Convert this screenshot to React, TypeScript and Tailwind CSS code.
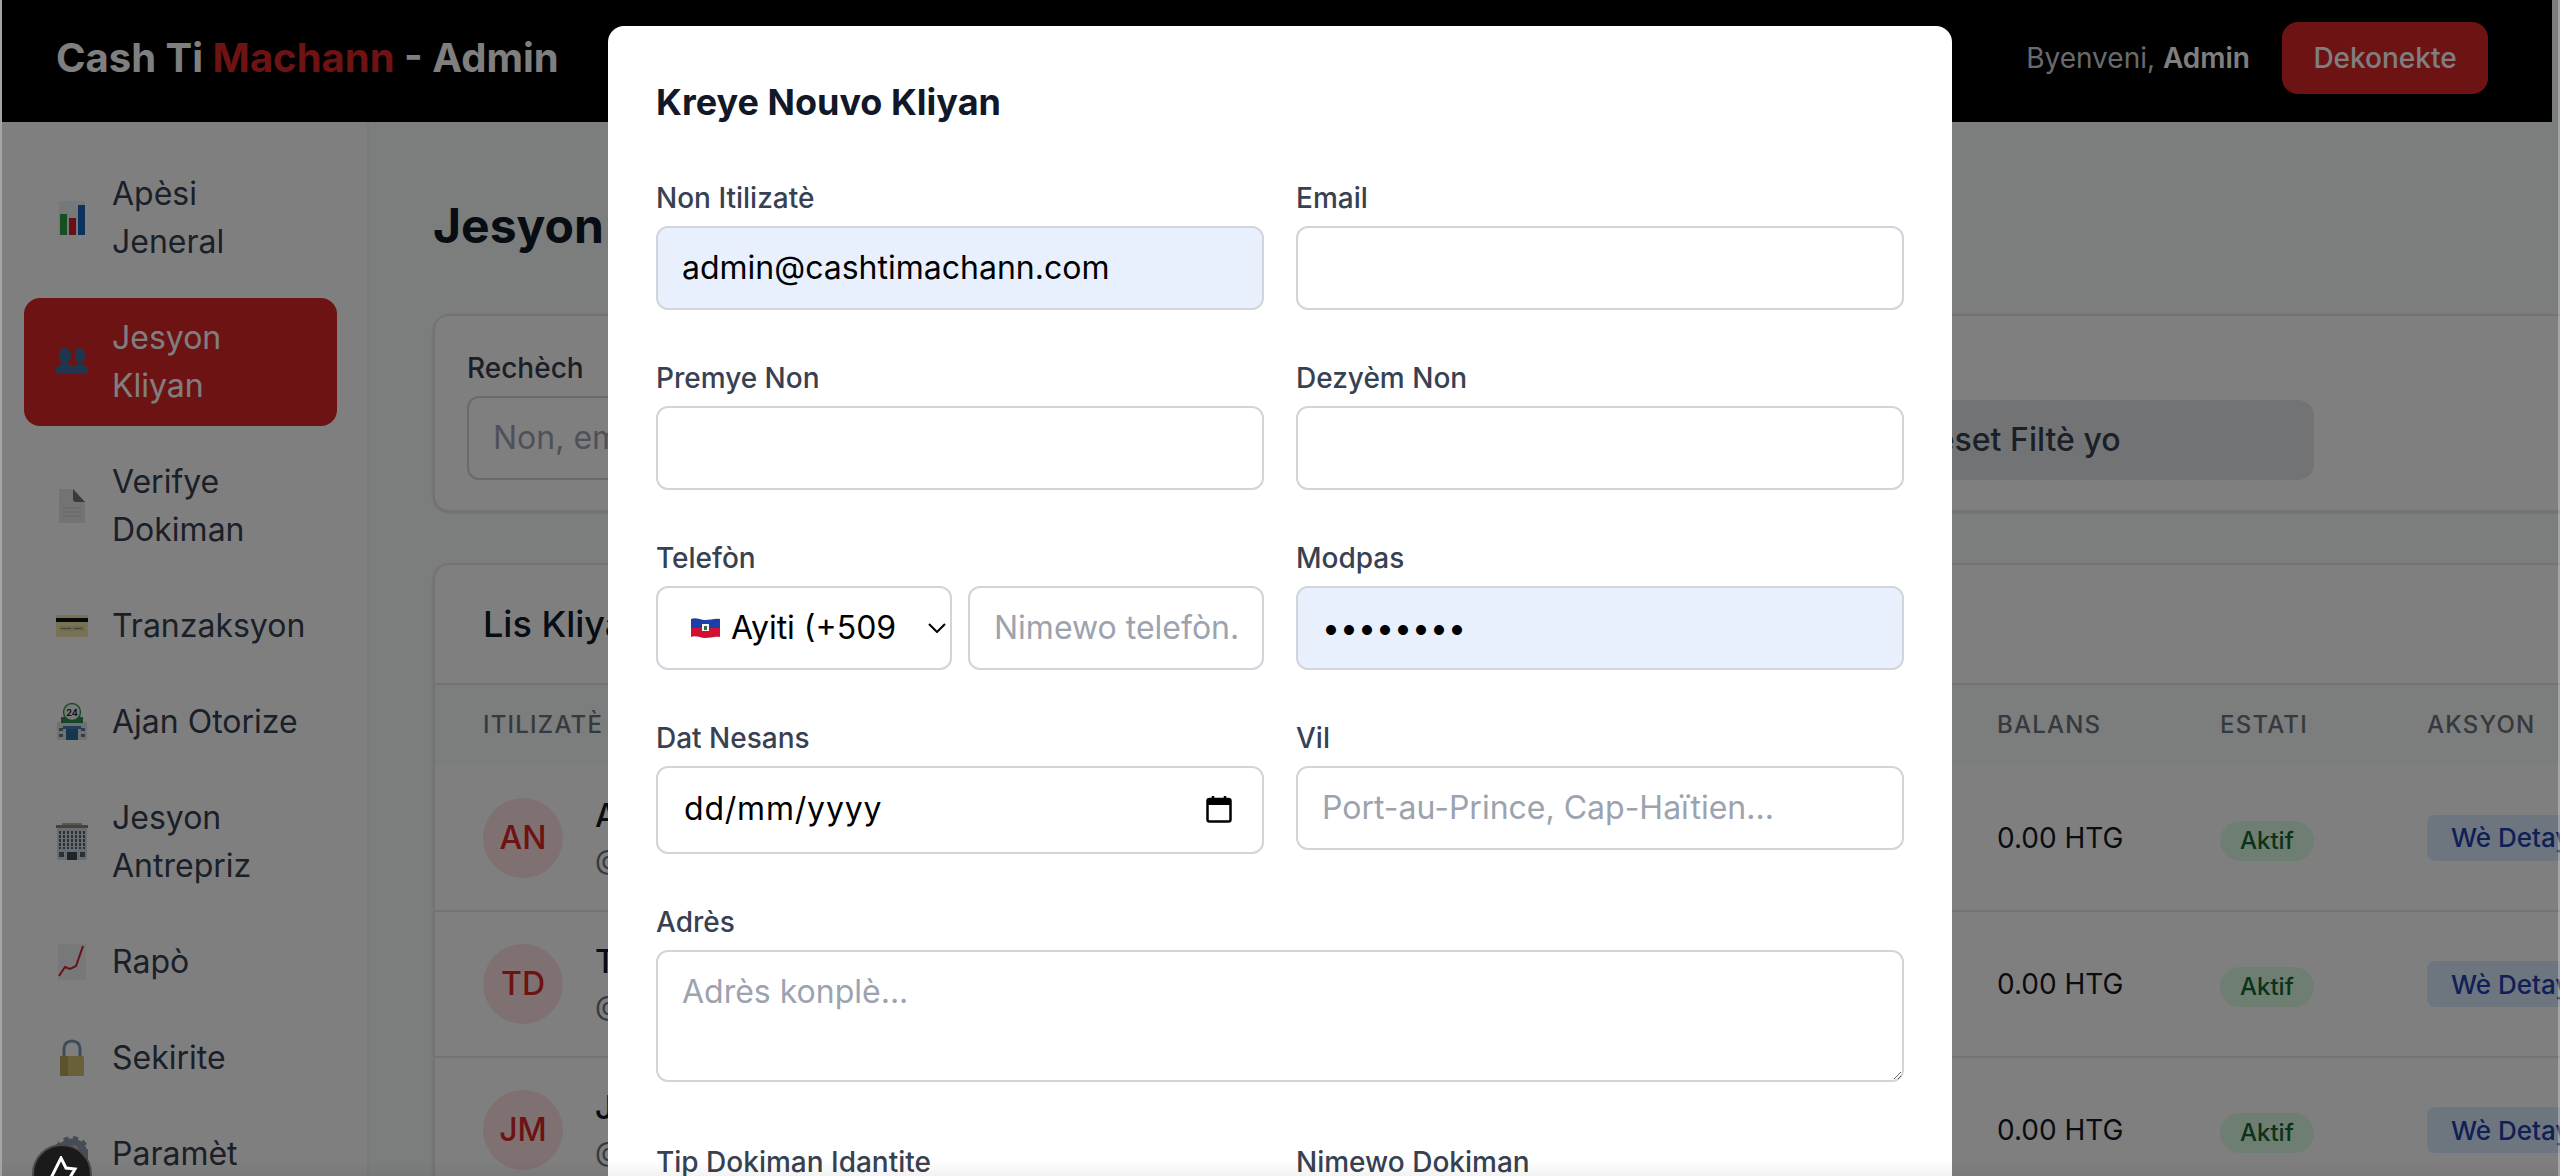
import type { ReactNode } from "react";

const ChartIcon = () => (
  <svg width="32" height="40" viewBox="0 0 32 40">
    <rect x="3" y="3" width="26" height="34" fill="#eef0f2" />
    <rect x="4" y="16" width="7" height="21" fill="#2e9e44" />
    <rect x="13" y="20" width="7" height="17" fill="#d3212d" />
    <rect x="22" y="7" width="7" height="30" fill="#1664c0" />
  </svg>
);

const UsersIcon = () => (
  <svg width="32" height="32" viewBox="0 0 32 32" fill="#3f6f9c">
    <path d="M9 2c4 0 6 3 6 7 0 3-1 6-3 7v2c2 1 5 2 6 4v6H0v-6c1-2 4-3 6-4v-2c-2-1-3-4-3-7 0-4 2-7 6-7z" />
    <path d="M23 2c4 0 6 3 6 7 0 3-1 6-3 7v2c2 1 5 2 6 4v6H16v-6c1-2 4-3 6-4v-2c-2-1-3-4-3-7 0-4 0-7 4-7z" />
  </svg>
);

const PageIcon = () => (
  <svg width="32" height="40" viewBox="0 0 32 40">
    <path d="M3 3h14l12 13v21H3z" fill="#e6e6e6" />
    <path d="M17 3l12 13H20c-2 0-3-1-3-3z" fill="#6f7378" />
    <path d="M6 22h20M6 26h20M6 30h20" stroke="#cfcfcf" strokeWidth="1" />
  </svg>
);

const CardIcon = () => (
  <svg width="32" height="24" viewBox="0 0 32 24">
    <rect x="0" y="1" width="32" height="22" rx="2" fill="#f3e7ad" />
    <rect x="0" y="4" width="32" height="4" fill="#111" />
    <rect x="3" y="12" width="26" height="5" fill="#ddd3a0" />
    <path d="M5 14.500h10M18 14.500h8" stroke="#8b8458" strokeWidth="1" />
  </svg>
);

const BankIcon = () => (
  <svg width="32" height="40" viewBox="0 0 32 40">
    <rect x="1" y="20" width="30" height="18" fill="#dfe2e4" />
    <rect x="5" y="15" width="22" height="6" fill="#2d8a4e" />
    <circle cx="16" cy="10" r="8.500" fill="#f2f2f2" stroke="#2f9a54" strokeWidth="1.500" />
    <text x="16" y="13.500" textAnchor="middle" fontSize="9" fontWeight="700" fill="#1d2b2b">24</text>
    <rect x="10" y="27" width="12" height="11" fill="#2d6d9c" />
    <rect x="7" y="24" width="18" height="3" fill="#3d7fb0" />
    <path d="M3 26h4v3H3zM3 32h4v3H3zM25 26h4v3h-4zM25 32h4v3h-4z" fill="#6b7b88" />
  </svg>
);

const OfficeIcon = () => (
  <svg width="32" height="40" viewBox="0 0 32 40">
    <rect x="1" y="4" width="30" height="34" fill="#d5dade" />
    <rect x="0" y="3" width="32" height="3" fill="#8f8778" />
    <rect x="6" y="1" width="20" height="2" fill="#b0aca2" />
    <path d="M4 9v18M8 9v18M12 9v18M16 9v18M20 9v18M24 9v18M28 9v18" stroke="#4b6478" strokeWidth="2" strokeDasharray="3 1" />
    <path d="M3 30h5v5H3zM24 30h5v5h-5z" fill="#4b6478" />
    <rect x="11" y="30" width="10" height="8" fill="#3a4a58" />
  </svg>
);

const TrendIcon = () => (
  <svg width="32" height="40" viewBox="0 0 32 40">
    <rect x="2" y="2" width="28" height="36" fill="#eef0f2" />
    <path d="M3 34l6-9 5 2 6-3 7-20" fill="none" stroke="#d3212d" strokeWidth="2" />
  </svg>
);

const LockIcon = () => (
  <svg width="32" height="40" viewBox="0 0 32 40">
    <path d="M8 19v-8c0-5 3-8 8-8s8 3 8 8v8" fill="none" stroke="#7f9ab5" strokeWidth="3" />
    <rect x="4" y="18" width="24" height="20" rx="1.500" fill="#d3bf72" />
    <rect x="4" y="18" width="8" height="20" fill="#b9a55c" />
  </svg>
);

const GearIcon = () => (
  <svg width="32" height="40" viewBox="0 0 32 40">
    <circle cx="16" cy="20" r="12" fill="none" stroke="#8b99a8" strokeWidth="7" />
    <circle cx="16" cy="20" r="16" fill="none" stroke="#8b99a8" strokeWidth="4" strokeDasharray="5 4.500" />
  </svg>
);

const navItems: { label: string; icon: ReactNode; active?: boolean }[] = [
  { label: "Apèsi Jeneral", icon: <ChartIcon /> },
  { label: "Jesyon Kliyan", icon: <UsersIcon />, active: true },
  { label: "Verifye Dokiman", icon: <PageIcon /> },
  { label: "Tranzaksyon", icon: <CardIcon /> },
  { label: "Ajan Otorize", icon: <BankIcon /> },
  { label: "Jesyon Antrepriz", icon: <OfficeIcon /> },
  { label: "Rapò", icon: <TrendIcon /> },
  { label: "Sekirite", icon: <LockIcon /> },
  { label: "Paramèt", icon: <GearIcon /> },
];

const rows = [
  { initials: "AN", letter: "A" },
  { initials: "TD", letter: "T" },
  { initials: "JM", letter: "J" },
];

const inputBase =
  "block w-full h-[84px] rounded-[12px] border-2 border-[#d1d5db] px-6 pb-[2px] text-[32px] leading-[48px] text-black placeholder:text-[#9ca3af] outline-none";
const inputClass = inputBase + " bg-white";
const autofillClass = inputBase + " bg-[#e8f0fe]";
const labelClass = "block mb-2 text-[28px] leading-[40px] font-medium text-[#374151]";

function Field({ label, children }: { label: string; children: ReactNode }) {
  return (
    <div>
      <label className={labelClass}>{label}</label>
      {children}
    </div>
  );
}

export default function App() {
  return (
    <div className="relative w-[2560px] h-[1176px] overflow-hidden bg-[#f9fafb] [font-family:Inter,sans-serif]">
      {/* Header */}
      <header className="ml-[2px] w-[2550px] h-[122px] bg-black flex items-center justify-between pl-[54px] pr-[64px] pb-[6px]">
        <h1 className="text-[40px] leading-[56px] font-bold text-white">
          Cash Ti <span className="text-[#dc2626]">Machann</span> - Admin
        </h1>
        <div className="flex items-center gap-8">
          <span className="text-[28px] leading-[40px] text-[#d1d5db]">
            Byenveni, <span className="font-semibold text-white">Admin</span>
          </span>
          <button className="h-[72px] w-[206px] rounded-[16px] bg-[#dc2626] text-[28px] font-medium text-white">
            Dekonekte
          </button>
        </div>
      </header>

      <div className="flex h-[1054px]">
        {/* Sidebar */}
        <aside className="w-[369px] shrink-0 bg-white border-r-2 border-[#f3f4f6] pl-6 pr-[30px] pt-8 flex flex-col gap-4">
          {navItems.map((item) => (
            <a
              key={item.label}
              className={
                "flex items-center gap-6 shrink-0 rounded-[16px] px-8 py-4 text-[32px] leading-[48px] " +
                (item.active ? "bg-[#dc2626] text-white" : "text-[#374151]")
              }
            >
              <span className="w-8 shrink-0 flex items-center justify-center">{item.icon}</span>
              <span>{item.label}</span>
            </a>
          ))}
        </aside>

        {/* Main */}
        <main className="flex-1 min-w-0 overflow-hidden pl-16 pt-[72px]">
          <h2 className="text-[48px] leading-[64px] font-bold text-[#111827] mb-[56px]">Jesyon Kliyan</h2>

          <div className="w-[2300px] h-[198px] rounded-[16px] border-2 border-[#e5e7eb] bg-white shadow-sm p-8 mb-[51px]">
            <div className="w-[1847px] flex items-end justify-between">
              <div className="w-[600px]">
                <label className={labelClass}>Rechèch</label>
                <input className={inputClass} placeholder="Non, email, telefòn..." readOnly />
              </div>
              <button className="h-[80px] w-[616px] rounded-[16px] bg-[#e5e7eb] pl-6 text-[32px] font-medium text-[#374151]">
                Reset Filtè yo
              </button>
            </div>
          </div>

          <div className="w-[2300px] rounded-[16px] border-2 border-[#e5e7eb] bg-white shadow-sm">
            <div className="h-[120px] border-b-2 border-[#e5e7eb] px-12 flex items-center">
              <h3 className="text-[36px] leading-[56px] font-medium text-[#111827]">Lis Kliyan</h3>
            </div>
            <table className="w-full table-fixed">
              <colgroup>
                <col className="w-[1514px]" />
                <col className="w-[223px]" />
                <col className="w-[207px]" />
                <col />
              </colgroup>
              <thead className="bg-[#f9fafb]">
                <tr className="h-[80px] text-left text-[24px] leading-[32px] font-medium tracking-wider text-[#6b7280]">
                  <th className="px-12 font-medium">ITILIZATÈ</th>
                  <th className="px-12 font-medium">BALANS</th>
                  <th className="px-12 font-medium">ESTATI</th>
                  <th className="px-12 font-medium">AKSYON</th>
                </tr>
              </thead>
              <tbody>
                {rows.map((row) => (
                  <tr key={row.initials} className="h-[146px] border-b-2 border-[#e5e7eb]">
                    <td className="px-12">
                      <div className="flex items-center gap-8">
                        <div className="w-20 h-20 rounded-full bg-[#fee2e2] flex items-center justify-center text-[32px] font-medium text-[#dc2626]">
                          {row.initials}
                        </div>
                        <div>
                          <p className="text-[32px] leading-[44px] font-medium text-[#111827]">{row.letter}</p>
                          <p className="text-[28px] leading-[44px] text-[#6b7280]">@</p>
                        </div>
                      </div>
                    </td>
                    <td className="px-12 text-[28px] whitespace-nowrap text-[#111827]">0.00 HTG</td>
                    <td className="px-12">
                      <span className="inline-block mt-[6px] rounded-full bg-[#dcfce7] px-5 py-1 text-[24px] leading-[32px] font-medium text-[#166534]">
                        Aktif
                      </span>
                    </td>
                    <td className="px-12">
                      <button className="h-[46px] rounded-[8px] bg-[#dbeafe] px-6 text-[26px] font-medium whitespace-nowrap text-[#1e40af]">
                        Wè Detay
                      </button>
                    </td>
                  </tr>
                ))}
              </tbody>
            </table>
          </div>
        </main>
      </div>

      {/* Dim layer */}
      <div className="absolute inset-0 bg-black/50" />

      {/* Modal */}
      <div className="absolute left-[608px] top-[26px] w-[1344px] rounded-[16px] bg-white p-12">
        <h2 className="text-[36px] leading-[56px] font-bold text-[#111827] mb-12">Kreye Nouvo Kliyan</h2>
        <div className="grid grid-cols-2 gap-x-8 gap-y-12">
          <Field label="Non Itilizatè">
            <input className={autofillClass} defaultValue="admin@cashtimachann.com" readOnly />
          </Field>
          <Field label="Email">
            <input className={inputClass} readOnly />
          </Field>
          <Field label="Premye Non">
            <input className={inputClass} readOnly />
          </Field>
          <Field label="Dezyèm Non">
            <input className={inputClass} readOnly />
          </Field>
          <Field label="Telefòn">
            <div className="flex gap-4">
              <div className="w-[296px] h-[84px] shrink-0 rounded-[12px] border-2 border-[#d1d5db] bg-white flex items-center pl-[33px] text-[32px] text-black">
                <svg width="29" height="22" viewBox="0 0 29 22" className="shrink-0 mr-[11px]">
                  <path d="M0 2c5-2 9 1 14 1s10-2 15-1v9H0z" fill="#1f3fa8" />
                  <path d="M0 11h29v9c-5-1-10 1-15 1s-9-3-14-1z" fill="#d21034" />
                  <rect x="11" y="7" width="7" height="7" fill="#f4f4f4" />
                  <rect x="13" y="9" width="3" height="4" fill="#3b6b3b" />
                </svg>
                <span className="whitespace-nowrap">Ayiti (+509</span>
                <svg width="18" height="10" viewBox="0 0 18 10" className="ml-[32px] shrink-0">
                  <path d="M1 1l8 8 8-8" fill="none" stroke="#000" strokeWidth="2" />
                </svg>
              </div>
              <input className={inputClass + " min-w-0"} placeholder="Nimewo telefòn..." readOnly />
            </div>
          </Field>
          <Field label="Modpas">
            <input type="password" className={autofillClass} defaultValue="password" readOnly />
          </Field>
          <Field label="Dat Nesans">
            <div className="h-[88px] rounded-[12px] border-2 border-[#d1d5db] bg-white flex items-center justify-between pl-[26px] pr-[30px] pb-[2px] text-[32px] tracking-[0.8px] text-black">
              <span>dd/mm/yyyy</span>
              <svg width="26" height="28" viewBox="0 0 26 28">
                <rect x="1.500" y="4" width="23" height="22.500" rx="2" fill="none" stroke="#000" strokeWidth="2.500" />
                <rect x="1.500" y="4" width="23" height="6" fill="#000" />
                <path d="M7 1v4M19 1v4" stroke="#000" strokeWidth="2.500" />
              </svg>
            </div>
          </Field>
          <Field label="Vil">
            <input className={inputClass} placeholder="Port-au-Prince, Cap-Haïtien..." readOnly />
          </Field>
          <div className="col-span-2 pb-3">
            <label className={labelClass}>Adrès</label>
            <textarea
              className="block w-full h-[132px] rounded-[12px] border-2 border-[#d1d5db] bg-white px-6 py-4 text-[32px] leading-[48px] placeholder:text-[#9ca3af] outline-none"
              placeholder="Adrès konplè..."
              readOnly
            />
          </div>
          <Field label="Tip Dokiman Idantite">
            <div className="h-[84px]" />
          </Field>
          <Field label="Nimewo Dokiman">
            <div className="h-[84px]" />
          </Field>
        </div>
      </div>

      {/* Bottom fade */}
      <div className="absolute left-0 right-0 bottom-0 h-[16px] bg-gradient-to-b from-transparent to-black/5" />

      {/* Edge strips */}
      <div className="absolute left-0 top-0 bottom-0 w-[2px] bg-white/30" />
      <div className="absolute right-0 top-0 bottom-0 w-[2px] bg-white/30" />

      {/* Dev badge */}
      <div className="absolute left-[32px] top-[1144px] w-[60px] h-[60px] rounded-full bg-[#1a1a1a] border-2 border-[#4a4a4a] flex justify-center pt-[10px]">
        <svg width="32" height="36" viewBox="0 0 32 36">
          <path d="M4 24L15 2l5 10 9 1-12 20 1-11z" fill="none" stroke="#fff" strokeWidth="3" strokeLinejoin="miter" />
        </svg>
      </div>
    </div>
  );
}
